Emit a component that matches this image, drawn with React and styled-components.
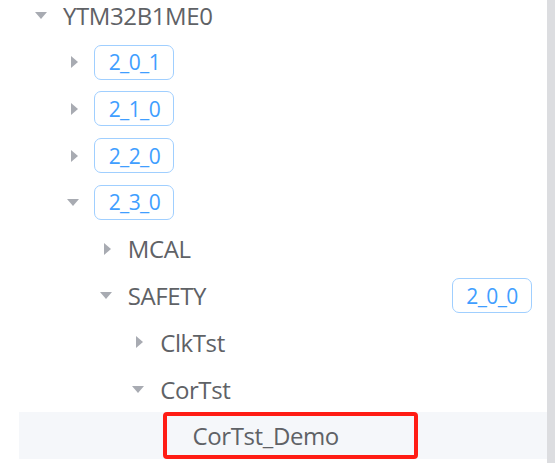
import React from "react";
import styled, { createGlobalStyle } from "styled-components";

const GlobalStyle = createGlobalStyle`
  html, body {
    margin: 0;
    padding: 0;
    background: #ffffff;
    overflow: hidden;
  }
  body {
    font-family: "Open Sans", "Noto Sans", "Liberation Sans", sans-serif;
  }
`;

const Page = styled.div`
  display: flex;
  width: 555px;
  height: 463px;
  overflow: hidden;
`;

const TreePanel = styled.div`
  flex: 1;
  padding-left: 19px;
  overflow: hidden;
`;

const Scrollbar = styled.div`
  width: 8px;
  background: #dcdde0;
`;

const Tree = styled.div`
  margin-top: -7.8px;
  display: flex;
  flex-direction: column;
`;

const Row = styled.div`
  display: flex;
  align-items: center;
  height: 46.7px;
  padding-left: ${(p) => p.$level * 32.4}px;
  padding-right: 15px;
  background: ${(p) => (p.$active ? "#f5f7fa" : "transparent")};
  color: #5f6266;
  font-size: 24px;
  white-space: nowrap;
`;

const CaretBox = styled.span`
  width: 44px;
  flex: none;
  display: flex;
  align-items: center;
  justify-content: center;
  padding-left: ${(p) => (p.$open ? 0 : 3)}px;
  box-sizing: border-box;
`;

const Label = styled.span`
  letter-spacing: -0.4px;
`;

const Tag = styled.span`
  display: inline-flex;
  align-items: center;
  justify-content: center;
  box-sizing: border-box;
  width: 80px;
  height: 35px;
  margin-left: -1px;
  border: 1px solid #a0cfff;
  border-radius: 7px;
  background: #ffffff;
  color: #409eff;
  font-size: 21px;
  letter-spacing: -0.6px;
`;

const Spacer = styled.span`
  flex: 1;
`;

const Marked = styled.span`
  display: flex;
  align-items: center;
  box-sizing: border-box;
  width: 255px;
  height: 47px;
  margin-left: -30px;
  margin-top: -1px;
  padding-left: 26px;
  border: 4.5px solid #ff1c14;
  border-radius: 4px;
`;

function Caret({ open, leaf }) {
  if (leaf) return <CaretBox />;
  return (
    <CaretBox $open={open}>
      {open ? (
        <svg width="12" height="7" viewBox="0 0 12 7">
          <path d="M0 0 L12 0 L6 7 Z" fill="#a8abb2" />
        </svg>
      ) : (
        <svg width="7" height="12" viewBox="0 0 7 12">
          <path d="M0 0 L7 6 L0 12 Z" fill="#a8abb2" />
        </svg>
      )}
    </CaretBox>
  );
}

const nodes = [
  { level: 0, open: true, label: "YTM32B1ME0" },
  { level: 1, tag: "2_0_1" },
  { level: 1, tag: "2_1_0" },
  { level: 1, tag: "2_2_0" },
  { level: 1, open: true, tag: "2_3_0" },
  { level: 2, label: "MCAL" },
  { level: 2, open: true, label: "SAFETY", version: "2_0_0" },
  { level: 3, label: "ClkTst" },
  { level: 3, open: true, label: "CorTst" },
  { level: 4, leaf: true, label: "CorTst_Demo", active: true, marked: true },
];

export default function App() {
  return (
    <Page>
      <GlobalStyle />
      <TreePanel>
        <Tree>
          {nodes.map((n, i) => (
            <Row key={i} $level={n.level} $active={n.active}>
              {n.marked ? (
                <>
                  <CaretBox />
                  <Marked>
                    <Label>{n.label}</Label>
                  </Marked>
                </>
              ) : (
                <>
                  <Caret open={n.open} leaf={n.leaf} />
                  {n.tag ? <Tag>{n.tag}</Tag> : <Label>{n.label}</Label>}
                  {n.version && (
                    <>
                      <Spacer />
                      <Tag>{n.version}</Tag>
                    </>
                  )}
                </>
              )}
            </Row>
          ))}
        </Tree>
      </TreePanel>
      <Scrollbar />
    </Page>
  );
}
